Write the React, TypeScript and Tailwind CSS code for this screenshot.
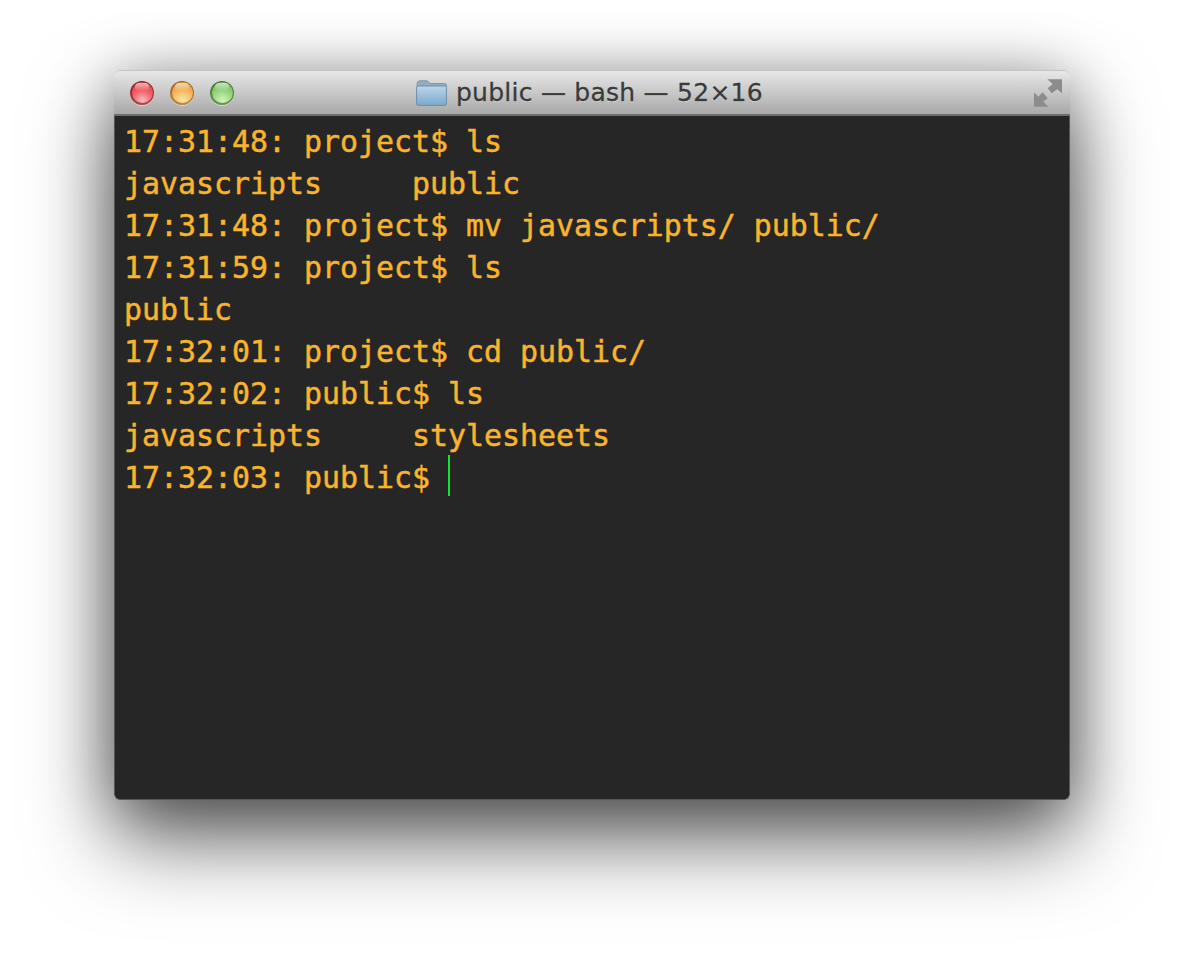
const lines: string[] = [
  "17:31:48: project$ ls",
  "javascripts     public",
  "17:31:48: project$ mv javascripts/ public/",
  "17:31:59: project$ ls",
  "public",
  "17:32:01: project$ cd public/",
  "17:32:02: public$ ls",
  "javascripts     stylesheets",
];

function Light({ rim, body }: { rim: string; body: string }) {
  return (
    <div className={`relative h-6 w-6 rounded-full overflow-hidden shadow-[0_1px_0_rgba(255,255,255,0.45)] ${rim}`}>
      <div className={`absolute inset-[1.5px] rounded-full ${body}`} />
      <div className="absolute left-[5px] top-[2px] h-[8px] w-[14px] rounded-full bg-gradient-to-b from-white/60 to-white/0" />
    </div>
  );
}

export default function App() {
  return (
    <div className="h-[958px] w-[1184px] overflow-hidden bg-white pt-[70px]">
      <div className="mx-auto flex h-[730px] w-[956px] flex-col rounded-[6px] shadow-[0_40px_85px_rgba(0,0,0,0.58),0_8px_60px_rgba(0,0,0,0.35)]">
        <div className="relative flex h-[46px] shrink-0 items-center rounded-t-[6px] border-t border-[#c4c4c4] border-b-2 border-b-[#6f6f6f] bg-gradient-to-b from-[#e8e8e8] to-[#a9a9a9] pl-4">
          <div className="flex gap-4">
            <Light rim="bg-gradient-to-b from-[#7d2226] to-[#b0474c]" body="bg-[radial-gradient(circle_at_50%_90%,#f8bcc0_0%,#ef5f64_50%,#dc3a40_100%)]" />
            <Light rim="bg-gradient-to-b from-[#94601f] to-[#bd8a45]" body="bg-[radial-gradient(circle_at_50%_90%,#fde8ae_0%,#f5b65c_50%,#dd8c2e_100%)]" />
            <Light rim="bg-gradient-to-b from-[#3f6d2c] to-[#6c9a55]" body="bg-[radial-gradient(circle_at_50%_90%,#d8f3bc_0%,#94d47a_50%,#64ab4c_100%)]" />
          </div>
          <div className="ml-[182px] flex items-center gap-[9px]">
            <svg width="31" height="26" viewBox="0 0 31 26" className="mt-[1px]">
              <defs>
                <linearGradient id="fb" x1="0" y1="0" x2="0" y2="1">
                  <stop offset="0" stopColor="#bcd6ea" />
                  <stop offset="1" stopColor="#79a9cd" />
                </linearGradient>
              </defs>
              <path d="M1 5 Q1 .8 3.5 .8 H10.5 Q12.5 .8 13.5 3.5 H28.5 Q30.5 3.5 30.5 5.5 V8 H1 Z" fill="#93adc1" stroke="#7e97aa" />
              <rect x="0.6" y="6" width="29.8" height="19.4" rx="1.5" fill="url(#fb)" stroke="#6d8fa9" />
            </svg>
            <span className="font-['DejaVu_Sans',sans-serif] text-[25px] leading-none tracking-[0.25px] text-[#3a3a3a] [-webkit-text-stroke:0.3px_#3a3a3a] [text-shadow:0_1px_0_rgba(255,255,255,0.4)]">
              public — bash — 52×16
            </span>
          </div>
          <svg width="30" height="30" viewBox="0 0 30 30" className="absolute right-[7px] top-[8px]">
            <path d="M14.3 .3 H29 V14.3 L24.3 10.3 L18.7 14.3 L14.7 9.3 L19.7 5 Z" fill="#8c8c8c" />
            <path d="M1 13.3 L5.3 17.7 L9.7 13.3 L14.7 19.3 L10.3 22.7 L15.3 27.7 H1 Z" fill="#8c8c8c" />
          </svg>
        </div>
        <div className="flex-1 rounded-b-[6px] border border-t-0 border-[#555555] bg-[#262626] pl-[9px] pt-[5px] font-['DejaVu_Sans_Mono',monospace] text-[29.9px] leading-[42px] text-[#f8b42c] [-webkit-text-stroke:0.5px_#f8b42c]">
          {lines.map((line, i) => (
            <div key={i} className="h-[42px] whitespace-pre">{line}</div>
          ))}
          <div className="flex h-[42px] items-start whitespace-pre">
            <span>17:32:03: public$ </span>
            <span className="-mt-[2px] h-[41px] w-[2px] bg-[#10e82c]" />
          </div>
        </div>
      </div>
    </div>
  );
}
